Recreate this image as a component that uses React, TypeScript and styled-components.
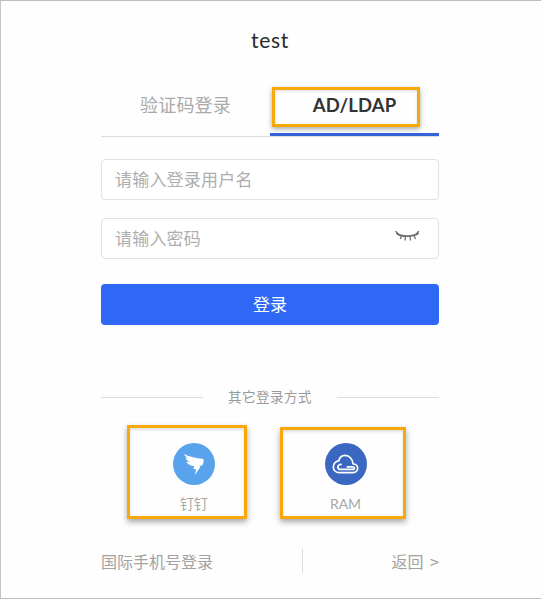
import React from "react";
import styled, { createGlobalStyle } from "styled-components";

const Global = createGlobalStyle`
  html, body { margin: 0; padding: 0; background: #fff; }
  * { box-sizing: border-box; }
`;

const Frame = styled.div`
  position: relative;
  width: 541px;
  height: 599px;
  overflow: hidden;
  background: #fefefe;
  border-top: 1px solid #bdbdbd;
  border-left: 1px solid #c4c4c4;
  border-bottom: 1px solid #bdbdbd;
  font-family: "Lato", "Noto Sans CJK SC", sans-serif;
  padding: 24px 102px 0 100px;
  display: flex;
  flex-direction: column;
`;

const Title = styled.h1`
  margin: 0;
  height: 30px;
  line-height: 30px;
  text-align: center;
  font-size: 21px;
  font-weight: 400;
  letter-spacing: 0.7px;
  color: #2b2b2b;
`;

const Tabs = styled.div`
  margin-top: 26px;
  display: grid;
  grid-template-columns: 1fr 1fr;
  border-bottom: 1px solid #dcdcdc;
`;

const Tab = styled.div<{ $active?: boolean }>`
  position: relative;
  height: 55px;
  padding-top: 11px;
  line-height: 26px;
  text-align: center;
  font-size: ${(p) => (p.$active ? "18.5px" : "18px")};
  font-weight: ${(p) => (p.$active ? 700 : 400)};
  color: ${(p) => (p.$active ? "#333" : "#aaa")};
  letter-spacing: ${(p) => (p.$active ? "0.1px" : "0.2px")};
  ${(p) => p.$active && "border-bottom: 3px solid #3463d6; margin-bottom: -1px;"}
`;

const TabMark = styled.span`
  position: absolute;
  left: 2px;
  top: 6px;
  width: 148px;
  height: 40px;
  border: 3px solid #f7a90c;
  box-shadow: 0 2px 5px rgba(0, 0, 0, 0.35), inset 0 1px 3px rgba(0, 0, 0, 0.15);
`;

const Form = styled.form`
  margin-top: 22px;
  display: flex;
  flex-direction: column;
`;

const Field = styled.div`
  height: 41px;
  margin-bottom: 18px;
  padding: 0 18px 3px 13px;
  display: flex;
  align-items: center;
  justify-content: space-between;
  background: #fff;
  border: 1px solid #dfe1e4;
  border-radius: 4px;
`;

const Placeholder = styled.span`
  font-size: 17px;
  color: #aeaeae;
  letter-spacing: 0.2px;
`;

const Submit = styled.button`
  margin-top: 7px;
  height: 41px;
  padding: 0 0 3px;
  border: 0;
  border-radius: 4px;
  background: #2e68f5;
  color: #fff;
  font-family: inherit;
  font-size: 17px;
`;

const Divider = styled.div`
  margin-top: 62px;
  display: flex;
  align-items: center;
  gap: 25px;
  font-size: 13.5px;
  line-height: 20px;
  color: #9a9a9a;
  letter-spacing: 0.5px;
  &::before, &::after {
    content: "";
    flex: 1;
    height: 1px;
    background: #dcdcdc;
  }
`;

const Socials = styled.div`
  margin-top: 18px;
  margin-left: 26px;
  display: flex;
  align-items: flex-start;
  gap: 33px;
`;

const Social = styled.div<{ $width: number; $height: number; $top: number; $shift: number }>`
  width: ${(p) => p.$width}px;
  height: ${(p) => p.$height}px;
  margin-top: ${(p) => p.$top}px;
  padding-left: ${(p) => p.$shift}px;
  border: 3px solid #f7a90c;
  box-shadow: 0 3px 6px rgba(0, 0, 0, 0.35), inset 0 2px 3px rgba(0, 0, 0, 0.12);
  display: flex;
  flex-direction: column;
  align-items: center;
`;

const Badge = styled.div<{ $color: string; $top: number }>`
  width: 42px;
  height: 42px;
  margin-top: ${(p) => p.$top}px;
  border-radius: 50%;
  background: ${(p) => p.$color};
  display: flex;
  align-items: center;
  justify-content: center;
`;

const SocialLabel = styled.span`
  margin-top: 9px;
  font-size: 14px;
  line-height: 20px;
  color: #a8a8a8;
`;

const Footer = styled.div`
  margin-top: 30px;
  display: flex;
  align-items: center;
  height: 24px;
  color: #a2a2a2;
`;

const FooterLeft = styled.span`
  flex: 0 0 201px;
  font-size: 16px;
`;

const FooterRule = styled.span`
  width: 1px;
  height: 24px;
  background: #dcdcdc;
`;

const FooterRight = styled.span`
  flex: 1;
  text-align: right;
  font-family: "Noto Sans CJK SC", sans-serif;
  font-size: 16px;
  word-spacing: 3px;
`;

const EyeIcon = () => (
  <svg width="25" height="14" viewBox="0 0 25 14" fill="none" stroke="#6f6f6f" strokeWidth="1.3" strokeLinecap="round">
    <path d="M2 3.5C6 7 18 7 23 3.5" strokeWidth="1.7" />
    <path d="M1 1.5L3.5 4.5M23.5 1.5L21 4.5M6.5 6L5.5 8.5M10.5 7L10 10M15 7L15.5 10M19 6L20.5 8.5" />
  </svg>
);

const DingIcon = () => (
  <svg width="22" height="25" viewBox="0 0 26 28" fill="#fff">
    <path d="M1 1.5C8 5 16 6.5 24 7.5C25 10 24 13 22.5 15.5L19 15.5L20.5 17L14 26.5L15.5 19.5L12 19L13.5 16C9 16 5 13 3.5 10.5L8 11.5C5 9.5 3 7 2.5 5.5L7 7C4.5 5.5 2 3.5 1 1.5Z" />
  </svg>
);

const CloudIcon = () => (
  <svg width="27" height="20" viewBox="0 0 30 22" fill="none" stroke="#fff" strokeWidth="1.9" strokeLinecap="round" strokeLinejoin="round">
    <path d="M8 20.5H23.5C26.5 20.5 28.5 18.3 28.5 15.7C28.5 13 26.2 11 23.5 11C23 6 19.5 1.5 14.5 1.5C11 1.5 8.3 4 7.5 7.5C4 8 1.5 10.8 1.5 14.2C1.5 17.8 4.3 20.5 8 20.5Z" />
    <path d="M10 11.5C7.8 11.5 6.5 13 6.5 14.5C6.5 16 7.8 17 9.5 17H23.5C25 17 25.5 15.6 24.5 14.6M17 14.2H23" />
  </svg>
);

export default function App() {
  return (
    <Frame>
      <Global />
      <Title>test</Title>
      <Tabs>
        <Tab>验证码登录</Tab>
        <Tab $active>
          AD/LDAP
          <TabMark />
        </Tab>
      </Tabs>
      <Form>
        <Field>
          <Placeholder>请输入登录用户名</Placeholder>
        </Field>
        <Field>
          <Placeholder>请输入密码</Placeholder>
          <EyeIcon />
        </Field>
        <Submit type="button">登录</Submit>
      </Form>
      <Divider>其它登录方式</Divider>
      <Socials>
        <Social $width={120} $height={94} $top={0} $shift={14}>
          <Badge $color="#58a3ec" $top={15}>
            <DingIcon />
          </Badge>
          <SocialLabel>钉钉</SocialLabel>
        </Social>
        <Social $width={126} $height={92} $top={2} $shift={5}>
          <Badge $color="#3a67c0" $top={13}>
            <CloudIcon />
          </Badge>
          <SocialLabel>RAM</SocialLabel>
        </Social>
      </Socials>
      <Footer>
        <FooterLeft>国际手机号登录</FooterLeft>
        <FooterRule />
        <FooterRight>返回 &gt;</FooterRight>
      </Footer>
    </Frame>
  );
}
